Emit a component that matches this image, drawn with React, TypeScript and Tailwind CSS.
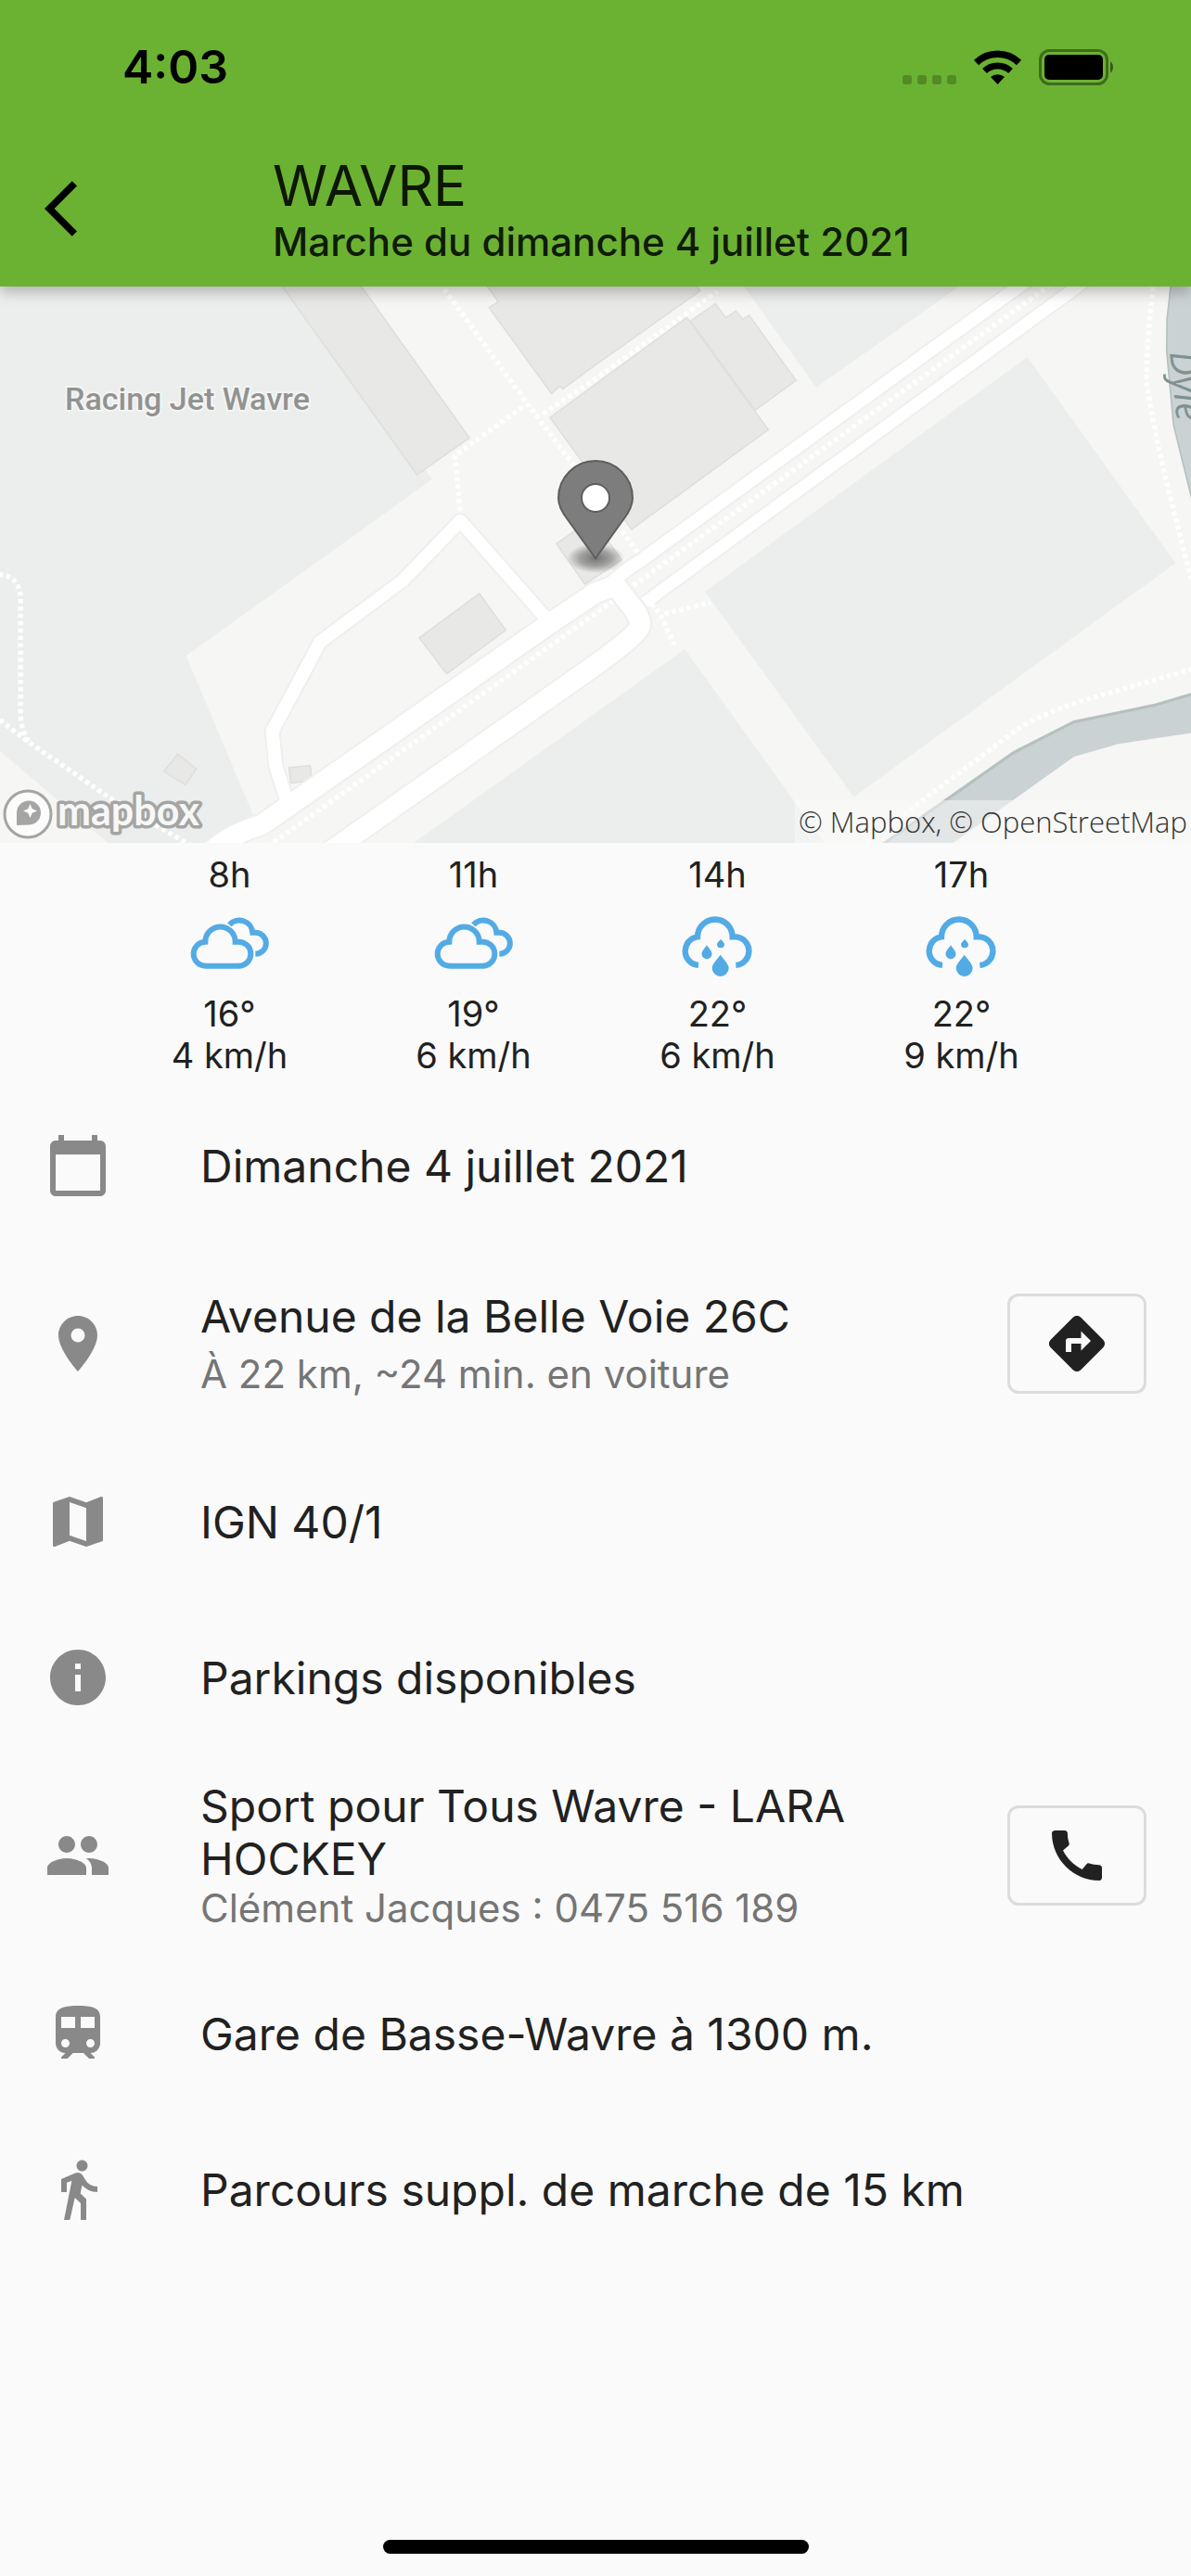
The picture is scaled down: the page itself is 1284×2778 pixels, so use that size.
import type { ReactNode } from "react";
import {
  MdArrowBackIos,
  MdCalendarToday,
  MdCall,
  MdDirections,
  MdDirectionsWalk,
  MdInfo,
  MdMap,
  MdPeople,
  MdPlace,
  MdTrain,
} from "react-icons/md";

function StatusBar() {
  return (
    <div className="flex h-[141px] items-start justify-between pt-[42px] pr-[84px] pl-[132px] text-black">
      <span className="text-[50px] leading-[60px] font-semibold">4:03</span>
      <svg className="mt-2 h-12 w-[230px]" viewBox="970 50 230 48" aria-hidden="true">
        <g fill="#000" opacity="0.22">
          <rect x="973" y="81" width="10" height="10" rx="3" />
          <rect x="989" y="81" width="10" height="10" rx="3" />
          <rect x="1005" y="81" width="10" height="10" rx="3" />
          <rect x="1021" y="81" width="10" height="10" rx="3" />
        </g>
        <path d="M1075.500 91 L1068 83 A11.500 11.500 0 0 1 1083 83 Z" />
        <path d="M1061.500 76.500 A20.500 20.500 0 0 1 1089.500 76.500" fill="none" stroke="#000" strokeWidth="7" />
        <path d="M1052.500 67.500 A33 33 0 0 1 1098.500 67.500" fill="none" stroke="#000" strokeWidth="7.500" />
        <rect x="1121.500" y="54.500" width="72" height="36" rx="10" fill="none" stroke="#000" strokeOpacity="0.4" strokeWidth="3" />
        <rect x="1126" y="59" width="63" height="27" rx="5" />
        <path d="M1197 66.500 C1201 68.500 1201 76.500 1197 78.500 Z" opacity="0.5" />
      </svg>
    </div>
  );
}

function AppHeader() {
  return (
    <header className="relative z-10 bg-[#6bb232] shadow-[0_6px_14px_rgba(0,0,0,0.25)]">
      <StatusBar />
      <div className="flex h-[168px] items-center">
        <button type="button" aria-label="Retour" className="ml-12 flex w-[246px] items-center text-black">
          <MdArrowBackIos size={72} />
        </button>
        <div className="text-black/87">
          <h1 className="text-[60px] leading-[72px]">WAVRE</h1>
          <p className="text-[42px] leading-[50px] font-medium">Marche du dimanche 4 juillet 2021</p>
        </div>
      </div>
    </header>
  );
}

const connectingLane = "M1440 930 L1212 662 L1060 825 L843 992 L717 1235 L726 1330 L760 1440";
const upperRoad = "M1600 840 Q1640 800 1690 768 L2682 23 L2742 -22";
const lowerRoad = "M1698 885 L2836 23 L2890 -18";
const avenue = "M520 1600 Q590 1520 690 1490 L1450 940 L1568 858 L1620 838 L1660 890 Q1695 935 1682 955 Q1672 978 1568 1055 L820 1600";

const footpaths = [
  "M1170 30 L1390 345 L1512 512",
  "M1375 352 L1198 484 L1212 640",
  "M1430 370 L1568 275 L1890 35",
  "M1638 690 L1680 750",
  "M-4 808 Q56 812 54 880 V1190 Q56 1232 75 1264",
  "M0 1205 L75 1265 L300 1425 L490 1540 L520 1560",
  "M705 1550 L1568 915 L1612 882",
  "M1668 838 L2760 22",
  "M1714 888 L1738 915 L1776 1000",
  "M1750 915 L1870 885",
  "M3036 24 Q3018 190 3020 290 Q3040 420 3070 550 L3136 820",
  "M3140 1066 L2850 1152 Q2710 1200 2660 1245 L2370 1470 L2260 1560",
];

function LocationMap() {
  return (
    <section aria-label="Carte" className="relative h-[600px] overflow-hidden bg-[#f6f6f4]">
      <svg className="h-full w-full" viewBox="0 0 1284 600" preserveAspectRatio="xMidYMid slice">
        <defs>
          <radialGradient id="pinShadow">
            <stop offset="0" stopColor="#000" stopOpacity="0.5" />
            <stop offset="0.55" stopColor="#000" stopOpacity="0.3" />
            <stop offset="1" stopColor="#000" stopOpacity="0" />
          </radialGradient>
        </defs>
        <g transform="translate(0 -9) scale(0.40944 0.39541)">
          <g fill="#ebeeec">
            <path d="M0 0 H730 L1138 548 L490 1030 L668 1468 L600 1570 H318 L0 1290 Z" />
            <path d="M1060 1562 L1803 1012 L2190 1568 Z" />
            <path d="M2705 215 L3095 777 L2248 1415 L1856 855 Z" />
            <path d="M1956 18 L2149 298 L2532 18 Z" />
          </g>
          <g fill="#cad2d3">
            <path d="M3084 10 L3073 110 L3072 200 L3090 400 L3140 610 V10 Z" />
            <path d="M3140 1134 L3038 1165 L2828 1210 L2670 1293 L2330 1540 L2300 1562 H2480 L2828 1305 L2945 1270 L3140 1240 Z" />
          </g>
          <g fill="none" stroke="#b5c0c0">
            <path d="M3084 10 L3073 110 L3072 200 L3090 400 L3140 610" strokeWidth="4" />
            <path d="M3140 1134 L3038 1165 L2828 1210 L2670 1293 L2330 1540 L2300 1562" strokeWidth="8" />
          </g>
          <g fill="#e8e8e6" stroke="#dfdfdd" strokeWidth="4">
            <path d="M728 0 L936 0 L1236 436 L1098 536 Z" />
            <path d="M1268 0 L1312 64 L1288 80 L1452 315 L1475 294 L1482 302 L1568 237 L1843 35 L1826 0 Z" />
            <path d="M1448 380 L1808 107 L2023 413 L1663 685 Z" />
            <path d="M1818 117 L1884 70 L1911 108 L1938 90 L1956 112 L1972 101 L2096 279 L1988 360 Z" />
            <path d="M1465 724 L1560 655 L1636 768 L1540 835 Z" />
            <path d="M1262 860 L1332 960 L1176 1079 L1104 981 Z" />
            <path d="M468 1298 L517 1338 L488 1382 L432 1345 Z" />
            <path d="M761 1335 L817 1329 L821 1371 L766 1377 Z" />
          </g>
          <g fill="none" stroke="#efefee" strokeLinejoin="round">
            <path d={connectingLane} strokeWidth="44" />
            <path d={upperRoad} strokeWidth="44" />
            <path d={lowerRoad} strokeWidth="42" />
            <path d={avenue} strokeWidth="64" />
          </g>
          <g fill="none" stroke="#fff" strokeLinejoin="round">
            <path d={connectingLane} strokeWidth="34" />
            <path d={upperRoad} strokeWidth="34" />
            <path d={lowerRoad} strokeWidth="32" />
            <path d={avenue} strokeWidth="54" />
          </g>
          <g fill="none" stroke="#fff" strokeWidth="13" strokeDasharray="11 9">
            {footpaths.map((d) => (
              <path key={d} d={d} />
            ))}
          </g>
        </g>

        <g fontFamily="Roboto, sans-serif">
          <text x="70" y="133" fontSize="34" fontWeight="500" fill="#929291" stroke="#f4f5f4" strokeWidth="4" paintOrder="stroke">
            Racing Jet Wavre
          </text>
          <text
            transform="translate(1261 71) rotate(84)"
            fontSize="40"
            fontStyle="italic"
            fontFamily="Open Sans, sans-serif"
            fill="#7f9190"
          >
            Dyle
          </text>
        </g>

        <ellipse cx="642" cy="293" rx="31" ry="16" fill="url(#pinShadow)" />
        <path
          d="M642 293 L611 250 C605 242 602 236 602 228 A40 40 0 0 1 682 228 C682 236 679 242 673 250 Z"
          fill="#7d7d7d"
          stroke="#5e5e5e"
          strokeWidth="2"
        />
        <circle cx="642" cy="228" r="15" fill="#fff" stroke="#5e5e5e" strokeWidth="2" />

        <circle cx="30" cy="569" r="25" fill="#fcfcfc" stroke="#a5a5a4" strokeWidth="3" />
        <path d="M18 581 V567 A13 13 0 1 1 31 580.500 Z" fill="#a5a5a4" />
        <path d="M32.500 558 L34.700 563.300 L40 565.500 L34.700 567.700 L32.500 573 L30.300 567.700 L25 565.500 L30.300 563.300 Z" fill="#fff" />
        <text
          x="62"
          y="581"
          fontSize="43"
          fontWeight="700"
          fontFamily="Lato, sans-serif"
          fill="#f7f7f7"
          stroke="#a5a5a4"
          strokeWidth="7"
          strokeLinejoin="round"
          paintOrder="stroke"
        >
          mapbox
        </text>
      </svg>
      <p className="absolute right-0 bottom-0 h-[46px] bg-[#fafafa]/50 px-1 font-['Open_Sans',sans-serif] text-[31px] leading-[46px] font-light whitespace-nowrap text-[#333]">
        © Mapbox, © OpenStreetMap
      </p>
    </section>
  );
}

function CloudyIcon() {
  return (
    <svg className="h-[60px] w-[94px]" viewBox="123 262 282 180" fill="none" stroke="#53abe5" strokeWidth="18" aria-hidden="true">
      <path d="M281 345 A48.500 48.500 0 0 0 184 345 A39 39 0 0 0 186 423 H292 A39 39 0 0 0 292 345 Z" />
      <path d="M262 290 A43 43 0 0 1 337 315 H346 A34.500 34.500 0 0 1 346 384" />
    </svg>
  );
}

function RainIcon() {
  return (
    <svg className="h-[66px] w-[94px]" viewBox="141 264 282 198" fill="#53abe5" aria-hidden="true">
      <path
        d="M219 422.500 A46 46 0 0 1 216 331 A56.500 56.500 0 0 1 329 331 H342 A46 46 0 0 1 340 422.500"
        fill="none"
        stroke="#53abe5"
        strokeWidth="19"
      />
      <path d="M290 389 C298 401 317 418 317 432 A27 27 0 0 1 263 432 C263 418 282 401 290 389 Z" />
      <path d="M246 358 C251 366 262.500 377 262.500 386 A16.500 16.500 0 0 1 229.500 386 C229.500 377 241 366 246 358 Z" />
      <path d="M291 338 C294 343 303 349 303 355 A12 12 0 0 1 279 355 C279 349 288 343 291 338 Z" />
    </svg>
  );
}

const forecast = [
  { hour: "8h", icon: <CloudyIcon />, temperature: "16°", wind: "4 km/h" },
  { hour: "11h", icon: <CloudyIcon />, temperature: "19°", wind: "6 km/h" },
  { hour: "14h", icon: <RainIcon />, temperature: "22°", wind: "6 km/h" },
  { hour: "17h", icon: <RainIcon />, temperature: "22°", wind: "9 km/h" },
];

function Forecast() {
  return (
    <section aria-label="Météo" className="grid h-[264px] grid-cols-4 px-[116px] pt-3 text-[38px] leading-[45px]">
      {forecast.map((slot) => (
        <div key={slot.hour} className="flex flex-col items-center">
          <span>{slot.hour}</span>
          <span className="flex h-[105px] items-start pt-[22px]">{slot.icon}</span>
          <span>{slot.temperature}</span>
          <span>{slot.wind}</span>
        </div>
      ))}
    </section>
  );
}

type RowProps = {
  icon: ReactNode;
  title: string;
  subtitle?: string;
  spaced?: boolean;
  action?: { label: string; icon: ReactNode };
};

function InfoRow({ icon, title, subtitle, spaced, action }: RowProps) {
  return (
    <li className={`flex items-center px-12 ${subtitle ? "min-h-[216px]" : "min-h-[168px]"}`}>
      <span className="w-[168px] shrink-0 text-[#898989]">{icon}</span>
      <div className={`flex min-w-0 flex-1 flex-col pr-12 ${spaced ? "gap-[9px]" : ""}`}>
        <span className="text-[48px] leading-[57px]">{title}</span>
        {subtitle && <span className="text-[42px] leading-[50px] text-[#757575]">{subtitle}</span>}
      </div>
      {action && (
        <button
          type="button"
          aria-label={action.label}
          className="flex h-[108px] w-[150px] shrink-0 items-center justify-center rounded-xl border-3 border-[#dcdcdc]"
        >
          {action.icon}
        </button>
      )}
    </li>
  );
}

export default function App() {
  return (
    <div className="flex min-h-screen flex-col bg-[#fafafa] font-[Inter,sans-serif] text-[#212121]">
      <AppHeader />
      <main className="flex-1">
        <LocationMap />
        <Forecast />
        <ul>
          <InfoRow icon={<MdCalendarToday size={72} />} title="Dimanche 4 juillet 2021" />
          <InfoRow
            icon={<MdPlace size={72} />}
            title="Avenue de la Belle Voie 26C"
            subtitle="À 22 km, ~24 min. en voiture"
            spaced
            action={{ label: "Itinéraire", icon: <MdDirections size={72} /> }}
          />
          <InfoRow icon={<MdMap size={72} />} title="IGN 40/1" />
          <InfoRow icon={<MdInfo size={72} />} title="Parkings disponibles" />
          <InfoRow
            icon={<MdPeople size={72} />}
            title="Sport pour Tous Wavre - LARA HOCKEY"
            subtitle="Clément Jacques : 0475 516 189"
            action={{ label: "Appeler", icon: <MdCall size={72} /> }}
          />
          <InfoRow icon={<MdTrain size={72} />} title="Gare de Basse-Wavre à 1300 m." />
          <InfoRow icon={<MdDirectionsWalk size={72} />} title="Parcours suppl. de marche de 15 km" />
        </ul>
      </main>
      <div className="mb-6 flex justify-center">
        <div className="h-[15px] w-[459px] rounded-full bg-black" />
      </div>
    </div>
  );
}
